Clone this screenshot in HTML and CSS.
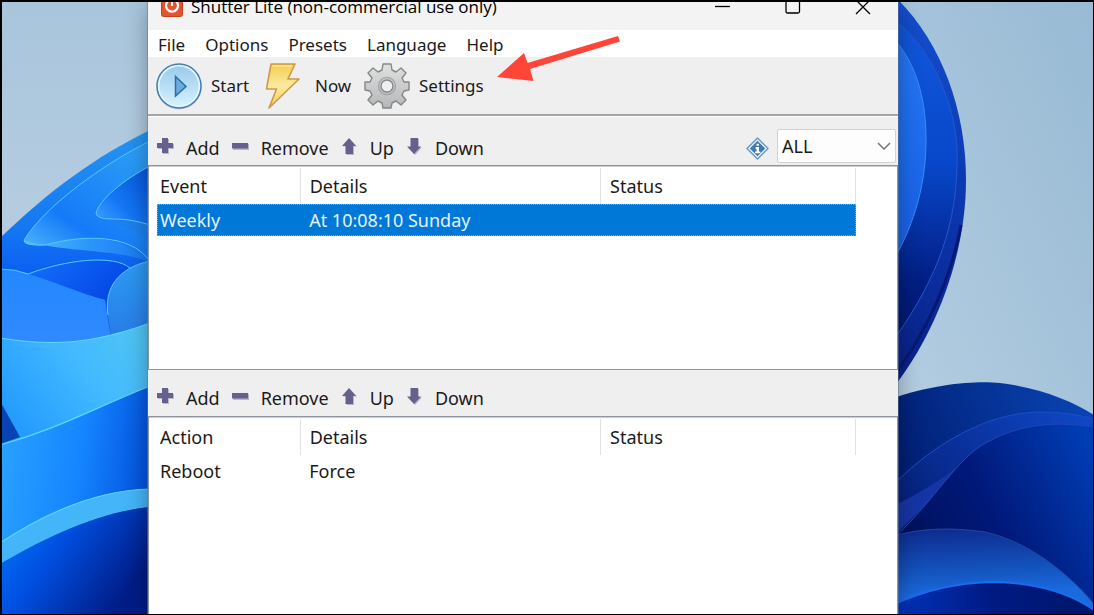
FILE: index.html
```html
<!DOCTYPE html>
<html lang="en">
<head>
<meta charset="utf-8">
<title>Shutter Lite</title>
<link rel="stylesheet" href="styles.css">
</head>
<body>
<svg class="wallpaper" viewBox="0 0 1094 615" preserveAspectRatio="none" aria-hidden="true">
  <defs>
    <linearGradient id="sky" x1="0" y1="0" x2="0" y2="1"><stop offset="0" stop-color="#a8c5dc"/><stop offset=".35" stop-color="#b5cce0"/><stop offset="1" stop-color="#b5cce0"/></linearGradient>
    <linearGradient id="skyR" x1="1" y1="0" x2="0" y2="1"><stop offset="0" stop-color="#98bad4"/><stop offset=".6" stop-color="#a9c6dc"/><stop offset="1" stop-color="#b7cfe3"/></linearGradient>
    <linearGradient id="a" x1="0" y1="0" x2="0" y2="1"><stop offset="0" stop-color="#2495f2"/><stop offset=".2" stop-color="#1577f3"/><stop offset=".35" stop-color="#0552ef"/></linearGradient>
    <linearGradient id="b" x1=".1" y1="1" x2=".8" y2="0"><stop offset="0" stop-color="#52bcfb"/><stop offset=".35" stop-color="#157af8"/><stop offset="1" stop-color="#2c9df6"/></linearGradient>
    <linearGradient id="b2" x1="0" y1="0" x2="1" y2="0"><stop offset="0" stop-color="#4fc0fb"/><stop offset=".5" stop-color="#2c97fb"/><stop offset="1" stop-color="#1a78ee"/></linearGradient>
    <linearGradient id="c" x1="0" y1="1" x2="1" y2="0"><stop offset="0" stop-color="#3da4ff"/><stop offset=".4" stop-color="#1377f5"/><stop offset="1" stop-color="#0552d8"/></linearGradient>
    <linearGradient id="d" x1="0" y1="0" x2="1" y2=".4"><stop offset="0" stop-color="#1470fb"/><stop offset="1" stop-color="#0449e6"/></linearGradient>
    <linearGradient id="e" x1="0" y1="0" x2="0" y2="1"><stop offset="0" stop-color="#2288ff"/><stop offset="1" stop-color="#3189ff"/></linearGradient>
    <linearGradient id="f" x1="0" y1="0" x2="0" y2="1"><stop offset="0" stop-color="#2b9cf2"/><stop offset="1" stop-color="#2878e6"/></linearGradient>
    <linearGradient id="g" x1="0" y1=".8" x2="1" y2=".2"><stop offset="0" stop-color="#2098ff"/><stop offset=".6" stop-color="#43baff"/><stop offset="1" stop-color="#4fc4f4"/></linearGradient>
    <linearGradient id="h" x1="0" y1=".4" x2="1" y2=".6"><stop offset="0" stop-color="#28a0ff"/><stop offset=".5" stop-color="#1585ff"/><stop offset="1" stop-color="#004bd9"/></linearGradient>
    <linearGradient id="i" x1="0" y1="0" x2="1" y2=".5"><stop offset="0" stop-color="#007aff"/><stop offset=".45" stop-color="#004fe0"/><stop offset="1" stop-color="#001c86"/></linearGradient>
    <linearGradient id="j" x1="0" y1="0" x2="0" y2="1"><stop offset="0" stop-color="#1450d0"/><stop offset=".5" stop-color="#0c38b0"/><stop offset="1" stop-color="#081f83"/></linearGradient>
    <linearGradient id="k" x1="0" y1="0" x2="0" y2="1"><stop offset="0" stop-color="#1158dd"/><stop offset=".45" stop-color="#0847c9"/><stop offset=".8" stop-color="#021f85"/><stop offset="1" stop-color="#001467"/></linearGradient>
    <linearGradient id="l" x1="0" y1="0" x2="0" y2="1"><stop offset="0" stop-color="#2676f5"/><stop offset="1" stop-color="#165fe5"/></linearGradient>
    <linearGradient id="m" x1="0" y1=".5" x2="1" y2="0"><stop offset="0" stop-color="#001a6c"/><stop offset="1" stop-color="#0947b8"/></linearGradient>
    <linearGradient id="n" x1="0" y1="1" x2="1" y2="0"><stop offset="0" stop-color="#00105a"/><stop offset="1" stop-color="#1048c8"/></linearGradient>
    <linearGradient id="o" x1="0" y1=".7" x2="1" y2=".2"><stop offset="0" stop-color="#000f55"/><stop offset=".5" stop-color="#00197a"/><stop offset="1" stop-color="#003cb2"/></linearGradient>
    <linearGradient id="p" x1=".3" y1="0" x2=".4" y2="1"><stop offset="0" stop-color="#0d2c90"/><stop offset=".5" stop-color="#1455bf"/><stop offset=".75" stop-color="#1a6ade"/></linearGradient>
    <linearGradient id="q" x1="0" y1="0" x2="1" y2="0"><stop offset="0" stop-color="#0234bd"/><stop offset=".5" stop-color="#001a83"/><stop offset="1" stop-color="#00166a"/></linearGradient>
  </defs>
  <rect width="500" height="615" fill="url(#sky)"/>
  <rect x="890" width="204" height="450" fill="url(#skyR)"/>

  <path d="M0 238C50 190 95 157 150 130V615H0Z" fill="url(#a)"/>
  <path d="M150 141C105 163 45 206 24 240Q23 246 45 245C85 234 125 235 150 262Z" fill="url(#b)"/>
  <path d="M24 240Q23 246 45 245C85 234 125 235 150 262C115 248 70 254 24 240Z" fill="url(#b2)"/>
  <path d="M150 166C125 179 98 200 96 214Q98 219 112 219C130 219 140 222 150 225Z" fill="url(#c)"/>
  <path d="M112 219C130 219 140 222 150 225V242C135 229 120 224 98 216Z" fill="#1c80ee"/>
  <path d="M0 269Q15 269 30 274L105 300L112 345H0Z" fill="url(#e)"/>
  <path d="M28 274C65 260 113 254 130 268L107 300C80 294 55 281 28 274Z" fill="url(#d)"/>
  <path d="M150 261C118 268 104 288 108 315L112 345H150Z" fill="url(#f)"/>
  <g fill="none" stroke="#56c8fa" stroke-width="1">
    <path d="M150 141C105 163 45 206 24 240Q23 246 45 245C85 234 130 235 148 259"/>
    <path d="M150 166C125 179 98 200 96 214Q98 219 112 219C130 219 140 222 150 225"/>
    <path d="M0 269Q15 269 28 274C65 260 113 254 130 268"/>
    <path d="M150 261C118 268 104 288 108 315"/>
  </g>
  <path d="M0 338C50 346 90 345 150 323V386C90 410 60 428 0 445Z" fill="url(#g)"/>
  <path d="M0 401L20 437L0 444Z" fill="#0743b5"/>
  <path d="M0 445C60 428 90 410 150 386V615H0Z" fill="url(#h)"/>
  <path d="M0 543C50 510 100 490 150 489V507C100 512 50 535 0 564Z" fill="#43b5f8"/>
  <path d="M0 564C50 535 100 512 150 507V615H0Z" fill="url(#i)"/>
  <g fill="none" stroke="#5fd8fa" stroke-width="1.2">
    <path d="M0 338C50 346 90 345 150 323"/>
    <path d="M0 445C60 428 90 410 150 386"/>
    <path d="M0 543C50 510 100 490 150 489"/>
  </g>

  <path d="M890 -8C938 35 966 105 966 180C966 255 936 335 890 392Z" fill="url(#j)"/>
  <path d="M961 225C951 280 925 335 892 378" fill="none" stroke="#06196f" stroke-width="3"/>
  <path d="M890 16C935 48 960 115 957 165C956 235 930 290 890 345Z" fill="url(#k)" stroke="#2458d0"/>
  <path d="M890 35C916 60 927 100 926 145C925 190 912 230 890 266Z" fill="url(#l)" stroke="#3b8bfb"/>

  <path d="M890 399C940 382 980 381 1000 383C1040 388 1070 400 1094 415V615H890Z" fill="url(#m)"/>
  <path d="M890 488C945 432 1000 412 1040 412Q1070 412 1094 419V615H890Z" fill="url(#n)" stroke="#1a4fc4"/>
  <path d="M890 508C925 490 942 480 968 458L940 490L890 540Z" fill="#1535a4"/>
  <path d="M890 542C930 505 950 470 975 450C1010 425 1050 420 1094 427V615H890Z" fill="url(#o)" stroke="#1c48bb"/>
  <path d="M890 537C920 528 950 527 985 532C1030 542 1070 575 1094 604V615H890Z" fill="url(#p)" stroke="#24469f"/>
  <path d="M890 606C930 588 960 583 990 582C1030 582 1065 590 1094 610V615H890Z" fill="url(#q)" stroke="#1a6df0" stroke-width="2"/>
</svg>

<main class="desktop">
  <section class="window" aria-label="Shutter Lite">
    <header class="titlebar">
      <svg class="app-icon" viewBox="0 0 22 22" aria-hidden="true"><rect x=".5" y=".5" width="21" height="21" rx="2" fill="#e4532f" stroke="#c9401f"/><path d="M8 5.500A6 6 0 1 0 14 5.500" fill="none" stroke="#fff" stroke-width="2.200"/><path d="M11 3V11" stroke="#fff" stroke-width="2"/></svg>
      <h1 class="title">Shutter Lite (non-commercial use only)</h1>
      <div class="caption-buttons">
        <button class="caption" aria-label="Minimize"><svg viewBox="0 0 16 16"><path d="M0 7.500H15"/></svg></button>
        <button class="caption" aria-label="Maximize"><svg viewBox="0 0 16 16"><rect x="1" y="1" width="13.500" height="13" rx="1.500"/></svg></button>
        <button class="caption" aria-label="Close"><svg viewBox="0 0 16 16"><path d="M1 1L15 15M15 1L1 15"/></svg></button>
      </div>
    </header>

    <nav class="menubar" aria-label="Menu">
      <button>File</button><button>Options</button><button>Presets</button><button>Language</button><button>Help</button>
    </nav>

    <div class="toolbar">
      <button class="tool">
        <svg viewBox="0 0 48 48" aria-hidden="true"><defs><linearGradient id="disc" x1="0" y1="0" x2="0" y2="1"><stop offset="0" stop-color="#9ccbea"/><stop offset="1" stop-color="#d3f1ff"/></linearGradient></defs><circle cx="24" cy="25" r="22.500" fill="#c9c9c9"/><circle cx="24" cy="24" r="22" fill="#e4f5fd" stroke="#3f7fb5" stroke-width="1.500"/><circle cx="24" cy="24" r="19.500" fill="url(#disc)"/><path d="M20.500 14.500V34L31 24.500Z" fill="#69ade0" stroke="#2e6da6" stroke-width="1.500"/></svg>
        Start
      </button>
      <button class="tool">
        <svg viewBox="0 0 48 48" aria-hidden="true"><defs><linearGradient id="bolt" x1="0" y1="0" x2="0" y2="1"><stop offset="0" stop-color="#f1ce50"/><stop offset=".5" stop-color="#fbeaa2"/><stop offset="1" stop-color="#f0cf55"/></linearGradient></defs><path d="M12 2H36L29 17H40L10 46L17.500 27H7.500Z" fill="url(#bolt)" stroke="#d09a42" stroke-width="1.600" stroke-linejoin="round"/><path d="M13.500 4H33" stroke="#fff0a8"/></svg>
        Now
      </button>
      <button class="tool">
        <svg viewBox="0 0 48 48" aria-hidden="true"><defs><linearGradient id="gear" x1="0" y1="0" x2="0" y2="1"><stop offset="0" stop-color="#e0e0e0"/><stop offset="1" stop-color="#b5b7b8"/></linearGradient></defs><path fill-rule="evenodd" d="M20 2H28L29 8L33 10L38 6L43 11L39 16L41 20L46 20V28L41 29L39 33L43 38L38 43L33 39L29 41L28 46H20L19 41L15 39L10 43L5 38L9 33L7 29L2 28V20L7 20L9 16L5 11L10 6L15 10L19 8ZM24 18A6 6 0 1 0 24 30A6 6 0 1 0 24 18Z" fill="url(#gear)" stroke="#858789" stroke-width="1.400" stroke-linejoin="round"/><circle cx="24" cy="24" r="8.500" fill="none" stroke="#a5a7a8" stroke-width="1.500"/></svg>
        Settings
      </button>
    </div>

    <div class="panel-bar panel-bar-events">
      <button class="edit"><svg viewBox="0 0 17 17" aria-hidden="true"><use href="#i-plus"/></svg>Add</button>
      <button class="edit"><svg viewBox="0 0 17 17" aria-hidden="true"><use href="#i-minus"/></svg>Remove</button>
      <button class="edit"><svg viewBox="0 0 17 17" aria-hidden="true"><use href="#i-up"/></svg>Up</button>
      <button class="edit"><svg viewBox="0 0 17 17" aria-hidden="true"><use href="#i-down"/></svg>Down</button>
      <label class="filter" for="filter" aria-label="Event filter"><svg viewBox="0 0 24 24" aria-hidden="true"><path d="M12 1L23 12L12 23L1 12Z" fill="#e9f2f8" stroke="#6c9abd" stroke-width="1.500" stroke-linejoin="round"/><path d="M12 4L20 12L12 20L4 12Z" fill="#4279ad"/><path d="M11 7H13.500V9H11ZM10 10.500H13.500V15H15V17H9.500V15H11V12.500H10Z" fill="#fff"/></svg></label>
      <span class="select-wrap"><select id="filter"><option>ALL</option></select><svg viewBox="0 0 14 8" aria-hidden="true"><path d="M1 1L7 7L13 1"/></svg></span>
    </div>

    <div class="list list-events">
      <table>
        <colgroup><col class="c-name"><col class="c-details"><col class="c-status"></colgroup>
        <thead><tr><th>Event</th><th>Details</th><th>Status</th></tr></thead>
        <tbody><tr class="selected"><td>Weekly</td><td>At 10:08:10 Sunday</td><td></td></tr></tbody>
      </table>
    </div>

    <div class="panel-bar panel-bar-actions">
      <button class="edit"><svg viewBox="0 0 17 17" aria-hidden="true"><use href="#i-plus"/></svg>Add</button>
      <button class="edit"><svg viewBox="0 0 17 17" aria-hidden="true"><use href="#i-minus"/></svg>Remove</button>
      <button class="edit"><svg viewBox="0 0 17 17" aria-hidden="true"><use href="#i-up"/></svg>Up</button>
      <button class="edit"><svg viewBox="0 0 17 17" aria-hidden="true"><use href="#i-down"/></svg>Down</button>
    </div>

    <div class="list list-actions">
      <table>
        <colgroup><col class="c-name"><col class="c-details"><col class="c-status"></colgroup>
        <thead><tr><th>Action</th><th>Details</th><th>Status</th></tr></thead>
        <tbody><tr><td>Reboot</td><td>Force</td><td></td></tr></tbody>
      </table>
    </div>

    <svg class="pointer" viewBox="0 0 124 48" aria-hidden="true"><path d="M0 41L27 17L30.500 27L121 0L123 5.500L33 33L36.500 45Z" fill="#ff4438"/></svg>
  </section>
</main>

<svg class="symbols" aria-hidden="true">
  <symbol id="i-plus" viewBox="0 0 17 17"><path d="M6 1H12V6H17V11H12V16H6V11H1V6H6Z" fill="#bbb5c6"/><path d="M5 0H11V5H16V10H11V15H5V10H0V5H5Z" fill="#64618f"/></symbol>
  <symbol id="i-minus" viewBox="0 0 17 17"><path d="M1 6H17V12H1Z" fill="#bbb5c6"/><path d="M0 5H16V10.500H0Z" fill="#64618f"/></symbol>
  <symbol id="i-up" viewBox="0 0 17 17"><path d="M9 1L16 8.500H13V17H5.500V8.500H2Z" fill="#bbb5c6"/><path d="M8 0L15 8H12V16H4.500V8H1Z" fill="#64618f"/></symbol>
  <symbol id="i-down" viewBox="0 0 17 17"><path d="M5.500 1H13V9.500H16L9 17L2 9.500H5.500Z" fill="#bbb5c6"/><path d="M4.500 0H12V8.500H15L8 16L1 8.500H4.500Z" fill="#64618f"/></symbol>
</svg>
</body>
</html>
```

FILE: styles.css
```css
* { box-sizing: border-box; }
html, body { height: 100%; }
body {
  margin: 0;
  overflow: hidden;
  background: #000;
  color: #1a1a1a;
  font: 18px/24px "Noto Sans", "Open Sans", sans-serif;
}
button {
  margin: 0;
  padding: 0;
  border: 0;
  background: none;
  color: inherit;
  font: inherit;
}
svg { display: block; flex: none; }
.symbols { position: absolute; width: 0; height: 0; }
.wallpaper { position: absolute; inset: 0; width: 100%; height: 100%; z-index: -1; }

.desktop {
  display: grid;
  grid-template-columns: 146fr 750fr 195fr;
  height: 100%;
  border: solid #000;
  border-width: 2px 1px 1px 2px;
  overflow: hidden;
}
.window {
  position: relative;
  grid-column: 2;
  display: flex;
  flex-direction: column;
  min-width: 0;
  min-height: 0;
  background: #efefef;
  box-shadow: 0 0 0 1px #66788c88, 0 4px 22px #00000055;
}

.titlebar {
  display: flex;
  align-items: flex-end;
  height: 28px;
  overflow: hidden;
  padding-left: 13px;
  background: #f3f3f3;
}
.app-icon { width: 22px; height: 22px; margin-bottom: 13px; }
.title {
  flex: 1;
  margin: 0 0 0 8px;
  color: #000;
  font: 17px/46px "Open Sans", "Noto Sans", sans-serif;
  white-space: nowrap;
}
.caption-buttons { display: flex; }
.caption { display: grid; place-items: center; width: 70px; height: 46px; }
.caption svg { width: 16px; height: 16px; fill: none; stroke: #000; stroke-width: 1.3; }

.menubar {
  display: flex;
  align-items: center;
  gap: 20px;
  height: 27px;
  padding: 2px 0 0 10px;
  background: #fff;
  font-size: 17px;
}
.toolbar {
  display: flex;
  align-items: center;
  height: 60px;
  padding: 0 0 2px 7px;
  border-bottom: 1px solid #fff;
  box-shadow: inset 0 -2px #a5a5a5;
  font-size: 17px;
}
.tool { display: flex; align-items: center; gap: 8px; min-width: 104px; }
.tool svg { width: 48px; height: 48px; }

.panel-bar { display: flex; align-items: center; gap: 12px; padding-left: 9px; font-size: 18px; }
.panel-bar-events { height: 48px; padding-top: 14px; }
.panel-bar-actions { height: 46px; padding-top: 9px; }
.edit { display: flex; align-items: center; gap: 12px; }
.edit svg { width: 17px; height: 17px; margin-bottom: 3px; }
.filter { margin: 0 -4px 0 auto; }
.filter svg { width: 23px; height: 23px; }
.select-wrap { display: grid; align-items: center; width: 119px; margin: -4px 2px 0 0; }
.select-wrap > * { grid-area: 1 / 1; }
.select-wrap select {
  appearance: none;
  width: 100%;
  height: 34px;
  padding: 0 0 0 4px;
  border: 1px solid #d2d2d2;
  border-radius: 2px;
  background: #fdfdfd;
  color: inherit;
  font: inherit;
}
.select-wrap svg {
  justify-self: end;
  width: 14px;
  height: 8px;
  margin-right: 5px;
  fill: none;
  stroke: #757575;
  stroke-width: 1.5;
  pointer-events: none;
}

.list { background: #fff; border: 1px solid #8f959f; box-shadow: inset 0 1px #c9ccd1; padding: 2px 41px 0 8px; }
.list-events { flex: 206 1 0; }
.list-actions { flex: 199 1 0; border-bottom: 0; }
table { width: 100%; border-collapse: collapse; table-layout: fixed; }
.c-name { width: 20.5%; }
.c-details { width: 43%; }
th, td { padding: 0 0 0 3px; text-align: left; font-weight: 400; white-space: nowrap; }
th { height: 36px; border-right: 1px solid #e2e2e2; }
th + th, td + td { padding-left: 9px; }
td { height: 32px; }
.selected { background: #0078d7; color: #e6f1fb; outline: 1px dotted #f08a3c; outline-offset: -1px; }

.pointer { position: absolute; left: 349px; top: 34px; width: 124px; height: 48px; }
```
